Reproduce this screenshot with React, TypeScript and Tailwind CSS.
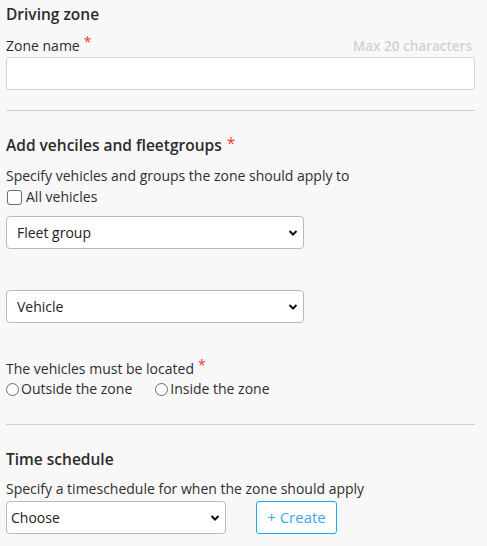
import React from "react";

function Chevron() {
  return (
    <svg
      className="pointer-events-none absolute right-[6px] top-1/2 -translate-y-1/2"
      width="10"
      height="7"
      viewBox="0 0 10 7"
    >
      <path d="M1.5 1.5 L5 5 L8.5 1.5" fill="none" stroke="#111" strokeWidth="2" />
    </svg>
  );
}

function Select({ label, width, padding }: { label: string; width: string; padding: string }) {
  return (
    <div className={`relative ${width}`}>
      <select
        className={`block h-[33px] w-full appearance-none rounded-[4px] border border-[#b9b9b9] bg-white ${padding} text-[14px] text-[#222] outline-none`}
        defaultValue={label}
      >
        <option>{label}</option>
      </select>
      <Chevron />
    </div>
  );
}

function Star() {
  return <span className="relative -top-[4px] ml-[4px] text-[#f0393b]">*</span>;
}

export default function App() {
  return (
    <div
      className="min-h-[546px] bg-[#f8f8f8] px-[6px] text-[14px] text-[#2e2e2e]"
      style={{ fontFamily: '"Open Sans", "Liberation Sans", sans-serif' }}
    >
      {/* Driving zone */}
      <h2 className="pt-[3px] text-[15.5px] font-semibold leading-[22px] text-[#2b2b2b]">Driving zone</h2>
      <div className="mt-[12px] flex items-end justify-between pr-[9px] leading-[18px]">
        <span>
          Zone name
          <Star />
        </span>
        <span className="text-[13.5px] font-semibold text-[#d2d2d2]">Max 20 characters</span>
      </div>
      <input className="mt-[2px] block h-[33px] w-[469px] rounded-[3px] border border-[#c8d6e6] bg-white" />
      <hr className="mt-[20px] w-[469px] border-t border-[#cfcfcf]" />

      {/* Vehicles */}
      <h2 className="mt-[23px] text-[15.5px] font-semibold leading-[22px] text-[#2b2b2b]">
        Add vehciles and fleetgroups
        <span className="relative -top-[2px] ml-[5px] font-normal text-[#f0393b]">*</span>
      </h2>
      <p className="mt-[10px] leading-[20px]">Specify vehicles and groups the zone should apply to</p>
      <label className="mt-[1px] flex items-center leading-[20px]">
        <span className="ml-[1px] mr-[4px] inline-block h-[15px] w-[15px] rounded-[3px] border-[1.5px] border-[#6b6b6b] bg-white" />
        All vehicles
      </label>
      <div className="mt-[9px]">
        <Select label="Fleet group" width="w-[298px]" padding="pl-[10px]" />
      </div>
      <div className="mt-[41px]">
        <Select label="Vehicle" width="w-[298px]" padding="pl-[10px]" />
      </div>

      <p className="mt-[36px] leading-[20px]">
        The vehicles must be located
        <Star />
      </p>
      <div className="flex items-center leading-[20px]">
        <span className="mr-[2px] inline-block h-[13px] w-[13px] rounded-full border border-[#6b6b6b] bg-white" />
        <span>Outside the zone</span>
        <span className="ml-[23px] mr-[2px] inline-block h-[13px] w-[13px] rounded-full border border-[#6b6b6b] bg-white" />
        <span>Inside the zone</span>
      </div>
      <hr className="mt-[25px] w-[469px] border-t border-[#cfcfcf]" />

      {/* Time schedule */}
      <h2 className="mt-[23px] text-[15.5px] font-semibold leading-[22px] text-[#2b2b2b]">Time schedule</h2>
      <p className="mt-[9px] leading-[20px]">Specify a timeschedule for when the zone should apply</p>
      <div className="mt-[2px] flex items-start">
        <Select label="Choose" width="w-[220px]" padding="pl-[4px]" />
        <button className="ml-[30px] h-[33px] w-[81px] rounded-[3px] border border-[#12aef0] bg-white text-[15px] text-[#3aa8ee]">
          + Create
        </button>
      </div>
    </div>
  );
}
